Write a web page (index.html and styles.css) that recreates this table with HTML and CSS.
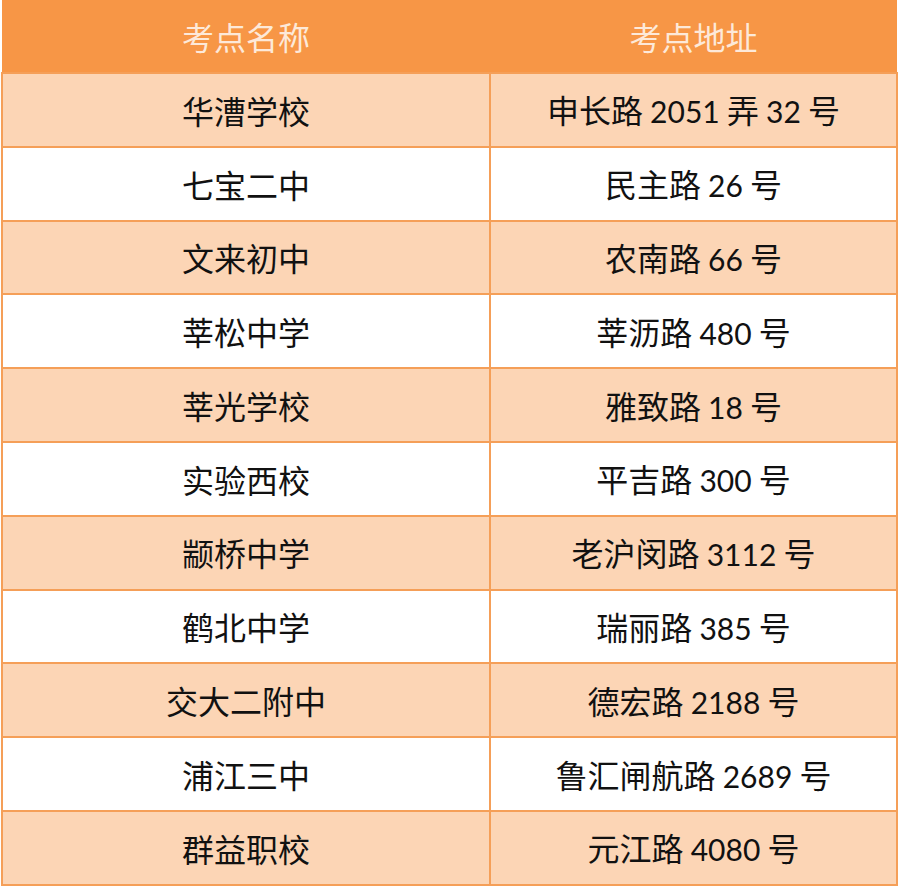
FILE: index.html
```html
<!DOCTYPE html>
<html lang="zh-CN">
<head>
<meta charset="utf-8">
<title>考点</title>
<link rel="stylesheet" href="styles.css">
</head>
<body>
<table class="exam">
  <thead>
    <tr class="head"><th>考点名称</th><th>考点地址</th></tr>
  </thead>
  <tbody>
    <tr class="tint"><td>华漕学校</td><td>申长路 <span class="num">2051</span> 弄 <span class="num">32</span> 号</td></tr>
    <tr><td>七宝二中</td><td>民主路 <span class="num">26</span> 号</td></tr>
    <tr class="tint"><td>文来初中</td><td>农南路 <span class="num">66</span> 号</td></tr>
    <tr><td>莘松中学</td><td>莘沥路 <span class="num">480</span> 号</td></tr>
    <tr class="tint"><td>莘光学校</td><td>雅致路 <span class="num">18</span> 号</td></tr>
    <tr><td>实验西校</td><td>平吉路 <span class="num">300</span> 号</td></tr>
    <tr class="tint"><td>颛桥中学</td><td>老沪闵路 <span class="num">3112</span> 号</td></tr>
    <tr><td>鹤北中学</td><td>瑞丽路 <span class="num">385</span> 号</td></tr>
    <tr class="tint"><td>交大二附中</td><td>德宏路 <span class="num">2188</span> 号</td></tr>
    <tr><td>浦江三中</td><td>鲁汇闸航路 <span class="num">2689</span> 号</td></tr>
    <tr class="tint"><td>群益职校</td><td>元江路 <span class="num">4080</span> 号</td></tr>
  </tbody>
</table>
</body>
</html>
```
FILE: styles.css
```css
html, body {
  margin: 0;
  padding: 0;
  background: #ffffff;
}
.exam {
  border-collapse: collapse;
  margin-left: 1px;
  width: 897px;
  table-layout: fixed;
  font-family: "Noto Sans CJK SC", sans-serif;
  font-size: 32px;
  color: #111111;
}
.num {
  font-family: "Lato", "Noto Sans CJK SC", sans-serif;
  font-size: 30px;
}
.exam th, .exam td {
  padding: 0;
  text-align: center;
  vertical-align: middle;
  font-weight: normal;
  line-height: 1.2;
}
.exam th:first-child, .exam td:first-child {
  width: 488px;
}
.head th {
  background: #f79646;
  color: #fde9d9;
  height: 72px;
  border: none;
}
.exam td {
  border: 2px solid #f59f58;
  height: 73.8px;
  box-sizing: border-box;
}
.exam tr.tint td {
  background: #fcd5b5;
}
```
